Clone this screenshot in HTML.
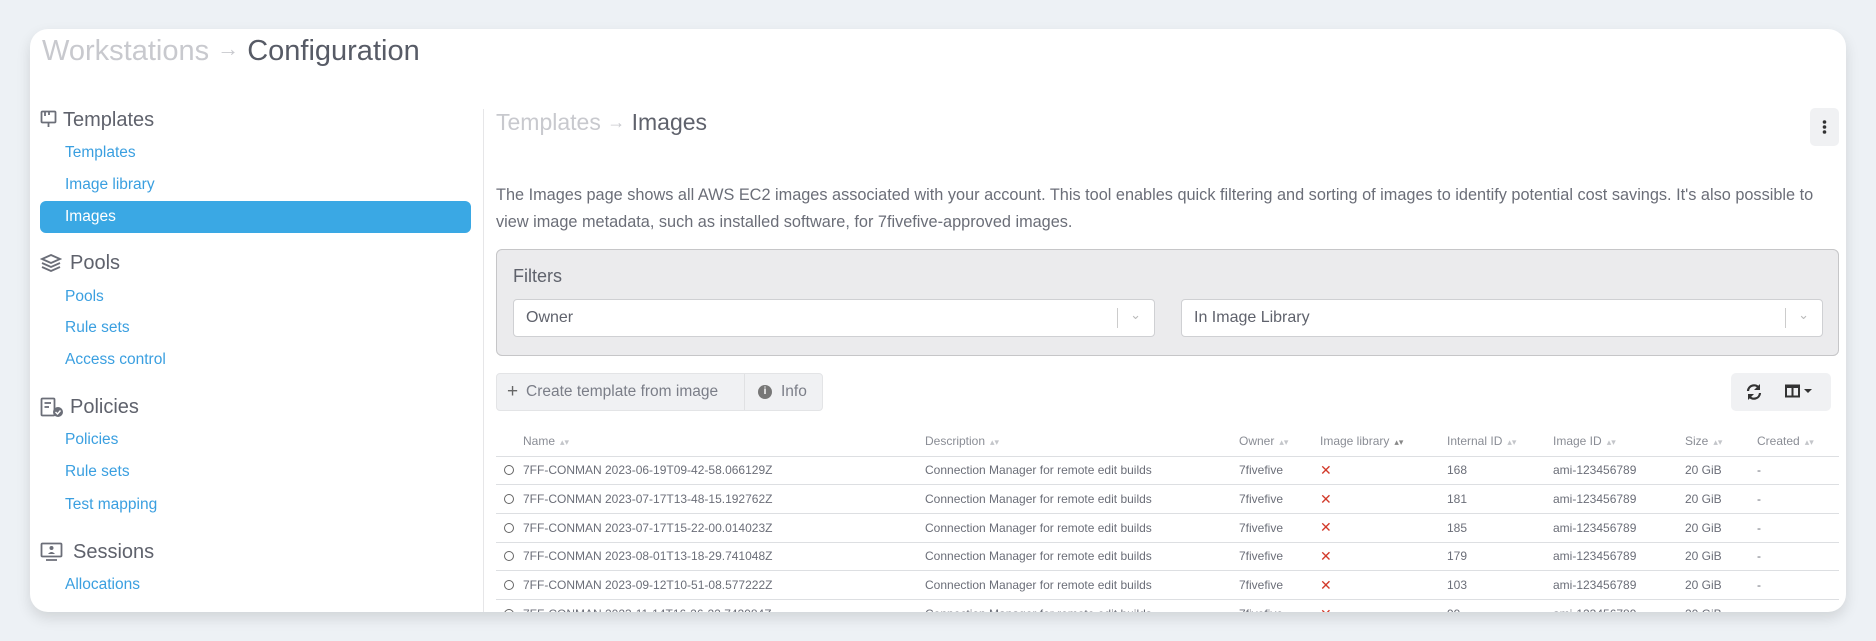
<!DOCTYPE html>
<html><head><meta charset="utf-8"><style>
*{box-sizing:border-box;margin:0;padding:0}
body{width:1876px;height:641px;background:#edf1f5;font-family:"Liberation Sans",sans-serif;color:#6b6e78;position:relative;overflow:hidden}
.card{position:absolute;left:30px;top:29px;width:1816px;height:583px;background:#fff;border-radius:18px;box-shadow:0 6px 14px rgba(0,0,0,.12);overflow:hidden}
.abs{position:absolute;white-space:nowrap}
.title{left:12px;top:6px;font-size:29px;color:#575b66}
.title .l{color:#c8c9ce}
.hdr{font-size:20px;color:#5f626c}
.lnk{font-size:15.5px;color:#3a9fe0}
.sel{left:10px;width:431px;height:32px;top:172px;background:#3aa8e4;border-radius:6px}
.ico{stroke:#6b6e78;fill:none;stroke-width:1.8}
.div{left:453px;top:80px;width:1px;height:510px;background:#e6e6e8}
.filt{left:466px;top:220px;width:1343px;height:107px;background:#ebebed;border:1px solid #c6c6c8;border-radius:6px}
.inp{top:49px;height:38px;background:#fff;border:1px solid #cfd0d3;border-radius:4px;font-size:16px;color:#5f626c;padding:9px 12px}
.btn{background:#f0f1f3;border:1px solid #e3e4e6;border-radius:4px}
table{position:absolute;left:466px;top:397px;width:1343px;border-collapse:collapse;font-size:12px}
th{font-weight:normal;color:#8a8d95;text-align:left;height:30px;padding:0}
td{height:28.7px;border-top:1px solid #dddfe2;color:#6b6e78;padding:0}
.x{color:#d23a2a;font-size:14px}
.s{color:#c4c6ca;font-size:9px;margin-left:5px}
.r{display:inline-block;width:10px;height:10px;border:1px solid #666;border-radius:50%;margin:0 9px 0 8px;vertical-align:-1px}
</style></head><body>
<div class="card">
<div class="abs title"><span class="l">Workstations</span> <span class="l" style="font-size:22px;position:relative;top:-4px">→</span> Configuration</div>

<svg class="abs" style="left:10px;top:81px" width="17" height="20"><rect class="ico" x="1.5" y="1.5" width="14" height="11" rx="1"/><line class="ico" x1="8.5" y1="12" x2="8.5" y2="17"/><line class="ico" x1="5" y1="2" x2="5" y2="6"/><line class="ico" x1="9" y1="2" x2="9" y2="5"/></svg>
<div class="abs hdr" style="left:33px;top:80px">Templates</div>
<div class="abs lnk" style="left:35px;top:115px">Templates</div>
<div class="abs lnk" style="left:35px;top:147px">Image library</div>
<div class="abs sel"></div>
<div class="abs lnk" style="left:35px;top:179px;color:#fff">Images</div>

<svg class="abs" style="left:10px;top:224px" width="22" height="20"><path class="ico" d="M11 2 L20 6 L11 10 L2 6 Z M2 10 L11 14 L20 10 M2 14 L11 18 L20 14"/></svg>
<div class="abs hdr" style="left:40px;top:223px">Pools</div>
<div class="abs lnk" style="left:35px;top:259px">Pools</div>
<div class="abs lnk" style="left:35px;top:290px">Rule sets</div>
<div class="abs lnk" style="left:35px;top:322px">Access control</div>

<svg class="abs" style="left:10px;top:368px" width="24" height="22"><rect class="ico" x="1.5" y="1.5" width="13" height="17" rx="1"/><line class="ico" x1="4.5" y1="6" x2="11" y2="6"/><line class="ico" x1="4.5" y1="10" x2="9" y2="10"/><circle cx="18" cy="15" r="5" fill="#6b6e78"/><path d="M15.5 15 l2 2 l3-3.5" stroke="#fff" stroke-width="1.4" fill="none"/></svg>
<div class="abs hdr" style="left:40px;top:367px">Policies</div>
<div class="abs lnk" style="left:35px;top:402px">Policies</div>
<div class="abs lnk" style="left:35px;top:434px">Rule sets</div>
<div class="abs lnk" style="left:35px;top:467px">Test mapping</div>

<svg class="abs" style="left:10px;top:513px" width="24" height="20"><rect class="ico" x="1.5" y="1.5" width="20" height="13" rx="1"/><circle cx="11.5" cy="6" r="2" fill="#6b6e78"/><path d="M8 12 q3.5-4 7 0" fill="#6b6e78"/><line class="ico" x1="6" y1="18" x2="17" y2="18"/></svg>
<div class="abs hdr" style="left:43px;top:512px">Sessions</div>
<div class="abs lnk" style="left:35px;top:547px">Allocations</div>

<div class="abs div"></div>

<div class="abs" style="left:466px;top:80px;font-size:23px;color:#5f626c"><span style="color:#c8c9ce">Templates</span> <span style="color:#c8c9ce;font-size:18px;position:relative;top:-2px">→</span> Images</div>
<div class="abs btn" style="left:1780px;top:79px;width:29px;height:38px;border:none;border-radius:5px"><svg width="29" height="38"><circle cx="14.5" cy="14" r="1.8" fill="#333"/><circle cx="14.5" cy="19" r="1.8" fill="#333"/><circle cx="14.5" cy="24" r="1.8" fill="#333"/></svg></div>

<div class="abs" style="left:466px;top:153px;font-size:16.3px;line-height:27px;color:#6b6e78;white-space:normal;width:1330px">The Images page shows all AWS EC2 images associated with your account. This tool enables quick filtering and sorting of images to identify potential cost savings. It's also possible to view image metadata, such as installed software, for 7fivefive-approved images.</div>

<div class="abs filt">
<div class="abs" style="left:16px;top:16px;font-size:18px;color:#5f626c">Filters</div>
<div class="abs inp" style="left:16px;width:642px">Owner<span style="position:absolute;right:36px;top:8px;width:1px;height:20px;background:#ccc"></span><span style="position:absolute;right:13px;top:7px;color:#bbb;font-size:13px">⌄</span></div>
<div class="abs inp" style="left:684px;width:642px">In Image Library<span style="position:absolute;right:36px;top:8px;width:1px;height:20px;background:#ccc"></span><span style="position:absolute;right:13px;top:7px;color:#bbb;font-size:13px">⌄</span></div>
</div>

<div class="abs btn" style="left:466px;top:344px;width:327px;height:38px;font-size:15.5px;color:#7b7e88">
<span class="abs" style="left:10px;top:7px;font-size:19px;color:#666">+</span>
<span class="abs" style="left:29px;top:9px">Create template from image</span>
<span class="abs" style="left:247px;top:0;width:1px;height:36px;background:#e0e1e3"></span>
<span class="abs" style="left:261px;top:11px;width:14px;height:14px;border-radius:50%;background:#777;color:#fff;font-size:10px;text-align:center;line-height:14px;font-weight:bold">i</span>
<span class="abs" style="left:284px;top:9px">Info</span>
</div>
<div class="abs btn" style="left:1701px;top:344px;width:100px;height:38px;border:none;border-radius:5px">
<svg class="abs" style="left:14px;top:10px" width="18" height="18"><path d="M3 8 A6 6 0 0 1 14 5 M15 10 A6 6 0 0 1 4 13" stroke="#333" stroke-width="2.2" fill="none"/><path d="M15 1 L15 7 L9 7Z M3 17 L3 11 L9 11Z" fill="#333"/></svg>
<svg class="abs" style="left:54px;top:11px" width="38" height="16"><rect x="1" y="1.5" width="13" height="11" stroke="#333" stroke-width="2" fill="none"/><line x1="7.5" y1="1" x2="7.5" y2="13" stroke="#333" stroke-width="2"/><line x1="1" y1="3" x2="14" y2="3" stroke="#333" stroke-width="2"/><path d="M19 5 L27 5 L23 9Z" fill="#333"/></svg>
</div>

<table>
<colgroup><col style="width:429px"><col style="width:314px"><col style="width:81px"><col style="width:127px"><col style="width:106px"><col style="width:132px"><col style="width:72px"><col></colgroup>
<tr><th style="padding-left:27px">Name<span class="s">▴▾</span></th><th>Description<span class="s">▴▾</span></th><th>Owner<span class="s">▴▾</span></th><th>Image library<span class="s" style="color:#888">▴▾</span></th><th>Internal ID<span class="s">▴▾</span></th><th>Image ID<span class="s">▴▾</span></th><th>Size<span class="s">▴▾</span></th><th>Created<span class="s">▴▾</span></th></tr>
<tr><td><span class="r"></span>7FF-CONMAN 2023-06-19T09-42-58.066129Z</td><td>Connection Manager for remote edit builds</td><td>7fivefive</td><td class="x">✕</td><td>168</td><td>ami-123456789</td><td>20 GiB</td><td>-</td></tr>
<tr><td><span class="r"></span>7FF-CONMAN 2023-07-17T13-48-15.192762Z</td><td>Connection Manager for remote edit builds</td><td>7fivefive</td><td class="x">✕</td><td>181</td><td>ami-123456789</td><td>20 GiB</td><td>-</td></tr>
<tr><td><span class="r"></span>7FF-CONMAN 2023-07-17T15-22-00.014023Z</td><td>Connection Manager for remote edit builds</td><td>7fivefive</td><td class="x">✕</td><td>185</td><td>ami-123456789</td><td>20 GiB</td><td>-</td></tr>
<tr><td><span class="r"></span>7FF-CONMAN 2023-08-01T13-18-29.741048Z</td><td>Connection Manager for remote edit builds</td><td>7fivefive</td><td class="x">✕</td><td>179</td><td>ami-123456789</td><td>20 GiB</td><td>-</td></tr>
<tr><td><span class="r"></span>7FF-CONMAN 2023-09-12T10-51-08.577222Z</td><td>Connection Manager for remote edit builds</td><td>7fivefive</td><td class="x">✕</td><td>103</td><td>ami-123456789</td><td>20 GiB</td><td>-</td></tr>
<tr><td><span class="r"></span>7FF-CONMAN 2023-11-14T16-26-22.742984Z</td><td>Connection Manager for remote edit builds</td><td>7fivefive</td><td class="x">✕</td><td>99</td><td>ami-123456789</td><td>20 GiB</td><td>-</td></tr>
</table>
</div>
</body></html>
